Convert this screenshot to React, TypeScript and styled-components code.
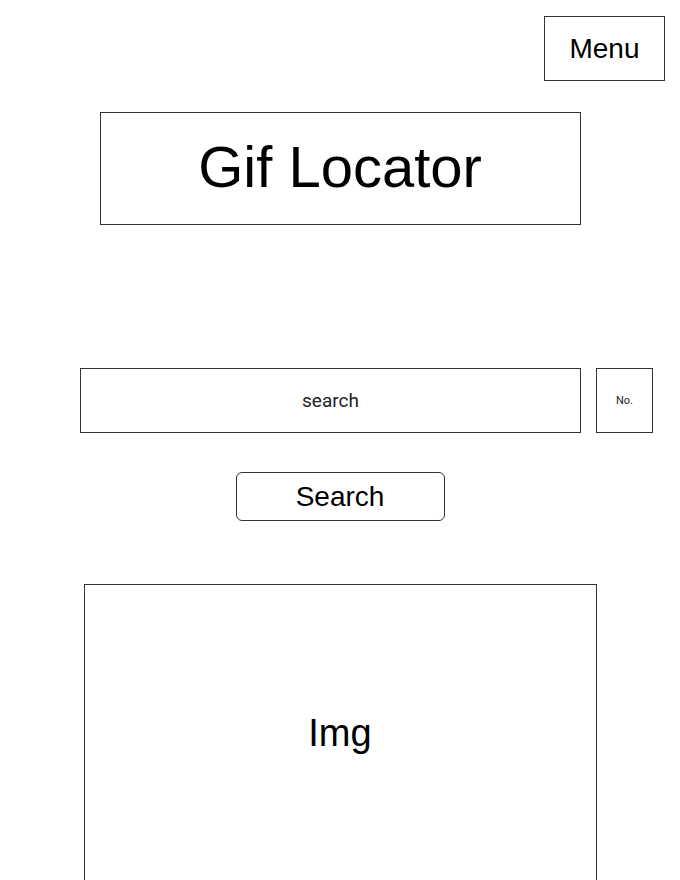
import * as React from 'react';
import styled, { createGlobalStyle } from 'styled-components';

const GlobalStyle = createGlobalStyle`
  html, body {
    margin: 0;
    padding: 0;
    background: #ffffff;
    font-family: "Liberation Sans", Arial, sans-serif;
    color: #000;
  }
`;

const Page = styled.div`
  width: 680px;
  height: 880px;
  overflow: hidden;
  display: flex;
  flex-direction: column;
  box-sizing: border-box;

  & > * {
    flex-shrink: 0;
  }
`;

const TopBar = styled.div`
  display: flex;
  justify-content: flex-end;
  padding: 16px 15px 0 0;
`;

const Box = styled.div`
  box-sizing: border-box;
  border: 1px solid #333;
  display: flex;
  align-items: center;
  justify-content: center;
  background: #fff;
`;

const MenuButton = styled(Box)`
  width: 121px;
  height: 65px;
  font-size: 28px;
`;

const Title = styled(Box)`
  align-self: center;
  width: 481px;
  height: 113px;
  margin-top: 31px;
  padding-bottom: 4px;
  font-size: 58px;
`;

const SearchRow = styled.div`
  display: flex;
  gap: 15px;
  margin: 143px 0 0 80px;
`;

const SearchInput = styled.input`
  box-sizing: border-box;
  width: 501px;
  height: 65px;
  border: 1px solid #333;
  border-radius: 0;
  outline: none;
  text-align: center;
  font-family: Roboto, "Liberation Sans", sans-serif;
  font-size: 19px;
  color: #222;
  &::placeholder {
    color: #222;
  }
`;

const CountBox = styled(Box)`
  width: 57px;
  height: 65px;
  font-family: Roboto, "Liberation Sans", sans-serif;
  font-size: 11px;
  color: #222;
`;

const SearchButton = styled.button`
  align-self: center;
  box-sizing: border-box;
  width: 209px;
  height: 49px;
  margin-top: 39px;
  border: 1px solid #333;
  border-radius: 6px;
  background: #fff;
  font-family: "Liberation Sans", Arial, sans-serif;
  font-size: 28px;
  color: #000;
  cursor: pointer;
`;

const ImageFrame = styled(Box)`
  align-self: center;
  width: 513px;
  height: 298px;
  margin-top: 63px;
  font-size: 38px;
`;

export default function App() {
  return (
    <Page>
      <GlobalStyle />
      <TopBar>
        <MenuButton>Menu</MenuButton>
      </TopBar>
      <Title>Gif Locator</Title>
      <SearchRow>
        <SearchInput placeholder="search" />
        <CountBox>No.</CountBox>
      </SearchRow>
      <SearchButton>Search</SearchButton>
      <ImageFrame>Img</ImageFrame>
    </Page>
  );
}
